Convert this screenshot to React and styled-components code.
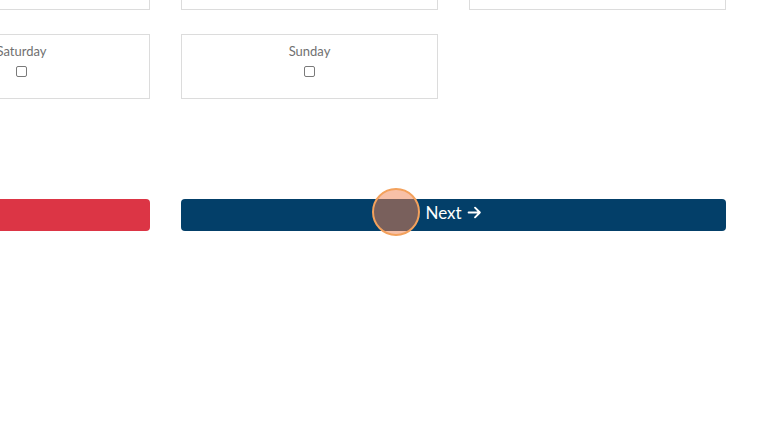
import React from "react";
import styled, { createGlobalStyle } from "styled-components";

const Global = createGlobalStyle`
  html, body { margin: 0; padding: 0; background: #fff; overflow: hidden; }
  body { font-family: Lato, "Open Sans", sans-serif; width: 764px; height: 426px; }
`;

const Page = styled.div`
  position: relative;
  width: 764px;
  height: 426px;
  overflow: hidden;
`;

const Grid = styled.div`
  display: grid;
  grid-template-columns: repeat(3, 257px);
  column-gap: 31px;
  row-gap: 24px;
  margin-left: -107px;
  margin-top: -55px;
`;

const DayCard = styled.label`
  box-sizing: border-box;
  height: 65px;
  border: 1px solid #dcdcdc;
  display: flex;
  flex-direction: column;
  align-items: center;
  padding-top: 8px;
  gap: 7px;
  color: #707070;
  font-size: 13px;
  font-weight: 400;
  line-height: 16px;
  visibility: ${(p) => (p.$hidden ? "hidden" : "visible")};
`;

const Box = styled.input`
  appearance: none;
  margin: 0;
  width: 11px;
  height: 11px;
  border: 1px solid #7a7a7a;
  border-radius: 2px;
  background: #fff;
`;

const Actions = styled.div`
  display: grid;
  grid-template-columns: 257px 545px;
  column-gap: 31px;
  margin-left: -107px;
  margin-top: 100px;
`;

const Button = styled.button`
  box-sizing: border-box;
  height: 32px;
  border: none;
  border-radius: 4px;
  background: ${(p) => (p.$variant === "danger" ? "#dc3545" : "#033f69")};
  color: #fff;
  font-family: Lato, sans-serif;
  font-size: 17px;
  font-weight: 400;
  display: flex;
  align-items: center;
  justify-content: center;
  gap: 5px;
  padding: 0 0 6px 0;
`;

const Click = styled.div`
  position: absolute;
  left: 372px;
  top: 188px;
  width: 48px;
  height: 48px;
  box-sizing: border-box;
  border-radius: 50%;
  background: rgba(240, 130, 80, 0.5);
  border: 2px solid #f3a15c;
`;

const Arrow = () => (
  <svg width="15" height="15" viewBox="0 0 14 14" fill="none" stroke="#fff" strokeWidth="1.8" strokeLinecap="round" strokeLinejoin="round">
    <path d="M1.5 7h10.5M7.5 2.5 12 7l-4.5 4.5" />
  </svg>
);

export default function App() {
  const days = [
    { label: "", box: false },
    { label: "", box: false },
    { label: "", box: false },
    { label: "Saturday", box: true },
    { label: "Sunday", box: true },
    { hidden: true },
  ];
  return (
    <Page>
      <Global />
      <Grid>
        {days.map((d, i) => (
          <DayCard key={i} $hidden={d.hidden}>
            {d.label}
            {d.box && <Box type="checkbox" />}
          </DayCard>
        ))}
      </Grid>
      <Actions>
        <Button $variant="danger" aria-label="Previous" />
        <Button>Next <Arrow /></Button>
      </Actions>
      <Click />
    </Page>
  );
}
